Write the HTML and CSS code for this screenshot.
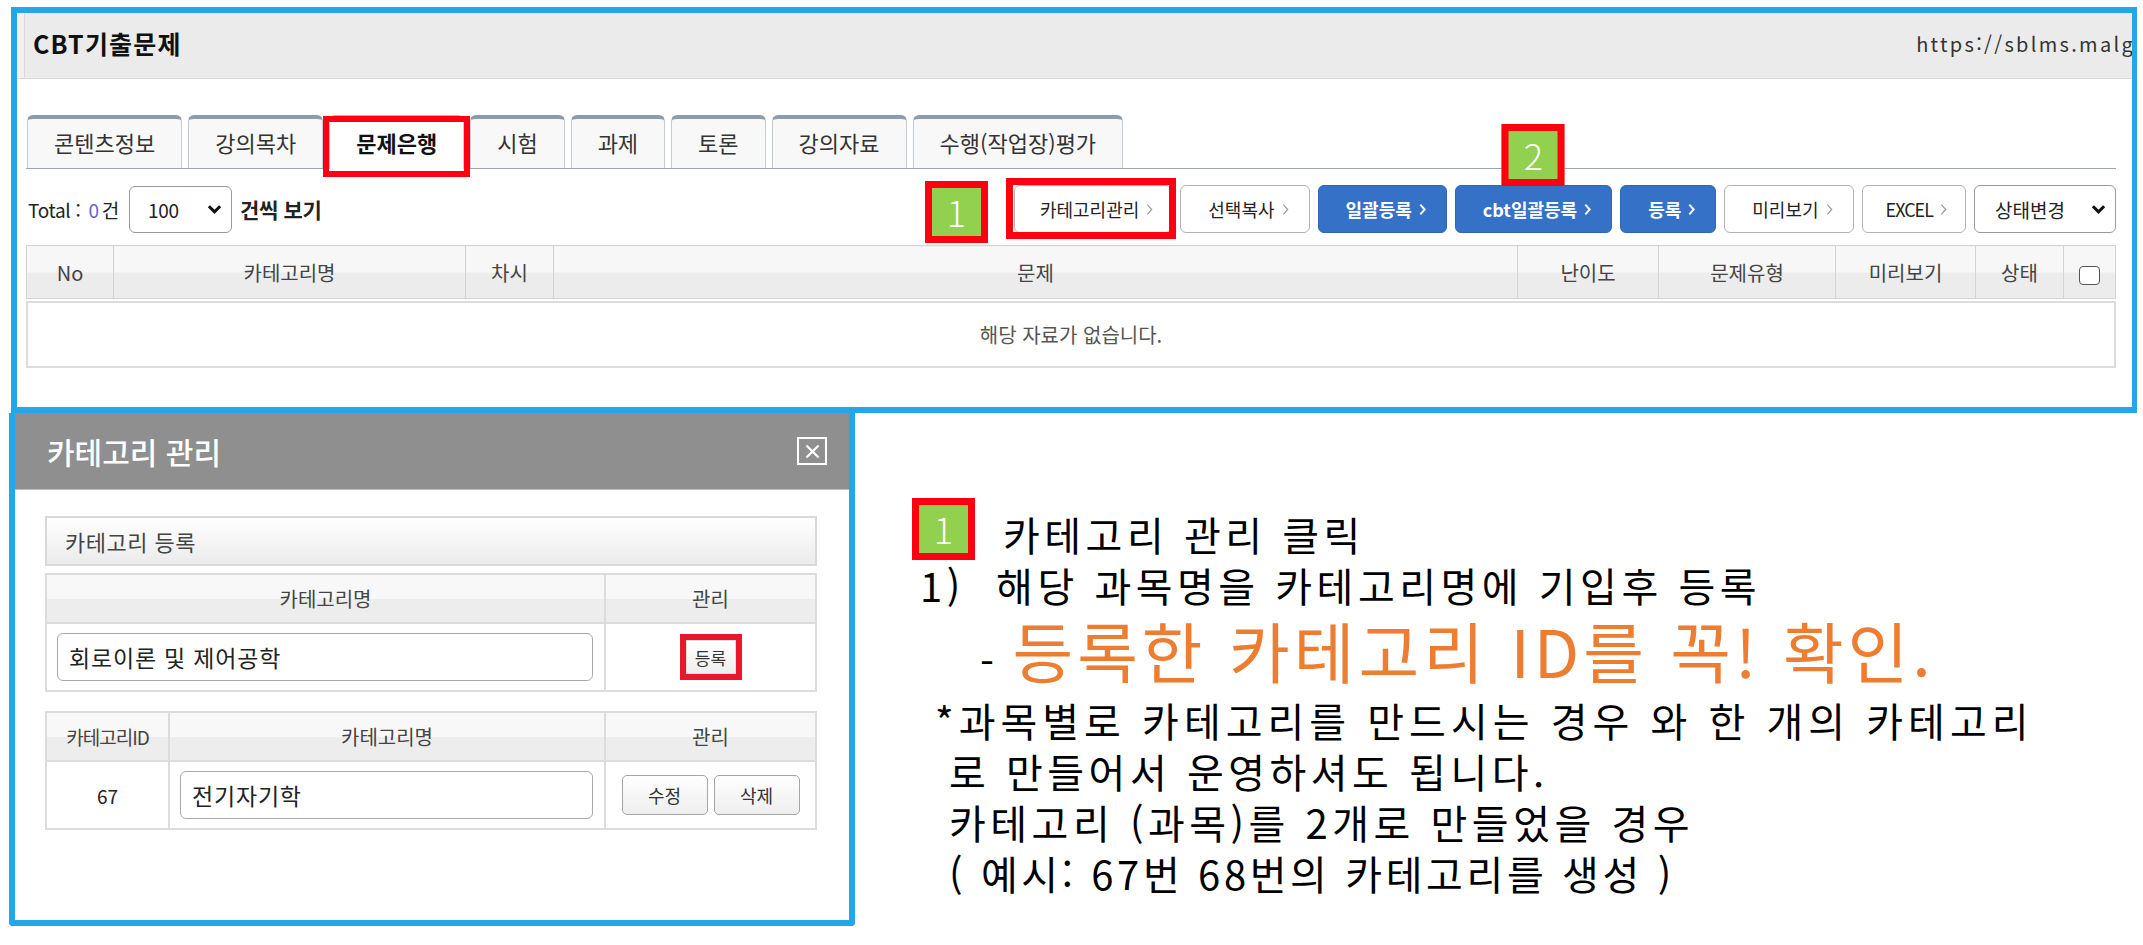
FILE: index.html
```html
<!DOCTYPE html>
<html lang="ko">
<head>
    <meta charset="UTF-8">
    <title>CBT기출문제 - 카테고리 관리</title>
    <link rel="stylesheet" href="styles.css">
</head>
<body>
    <!-- Course content panel -->
    <section class="panel">
        <div class="panel-head">
            <h1>CBT기출문제</h1>
            <span class="url">https://sblms.malg</span>
        </div>
        <div class="panel-body">
            <ul class="tabs">
                <li class="tab">콘텐츠정보</li>
                <li class="tab">강의목차</li>
                <li class="tab active">문제은행</li>
                <li class="tab">시험</li>
                <li class="tab">과제</li>
                <li class="tab">토론</li>
                <li class="tab">강의자료</li>
                <li class="tab">수행(작업장)평가</li>
            </ul>

            <div class="toolbar">
                <div class="count">
                    <span>Total : <em>0</em>건</span>
                    <div class="select">100
                        <svg class="caret" viewBox="0 0 16 10"><path d="M2 2l6 6 6-6"/></svg>
                    </div>
                    <b class="per">건씩 보기</b>
                </div>
                <div class="actions">
                    <button class="btn marked">
                        <span class="marker marker-left">1</span>
                        카테고리관리
                        <svg class="chev" viewBox="0 0 8 14"><path d="M1.5 1.5l5 5.5-5 5.5"/></svg>
                    </button>
                    <button class="btn">선택복사 <svg class="chev" viewBox="0 0 8 14"><path d="M1.5 1.5l5 5.5-5 5.5"/></svg></button>
                    <button class="btn btn-blue">일괄등록 <svg class="chev" viewBox="0 0 8 14"><path d="M1.5 1.5l5 5.5-5 5.5"/></svg></button>
                    <button class="btn btn-blue">
                        <span class="marker marker-top">2</span>
                        cbt일괄등록 <svg class="chev" viewBox="0 0 8 14"><path d="M1.5 1.5l5 5.5-5 5.5"/></svg>
                    </button>
                    <button class="btn btn-blue">등록 <svg class="chev" viewBox="0 0 8 14"><path d="M1.5 1.5l5 5.5-5 5.5"/></svg></button>
                    <button class="btn">미리보기 <svg class="chev" viewBox="0 0 8 14"><path d="M1.5 1.5l5 5.5-5 5.5"/></svg></button>
                    <button class="btn btn-narrow">EXCEL <svg class="chev" viewBox="0 0 8 14"><path d="M1.5 1.5l5 5.5-5 5.5"/></svg></button>
                    <div class="select select-wide">상태변경
                        <svg class="caret" viewBox="0 0 16 10"><path d="M2 2l6 6 6-6"/></svg>
                    </div>
                </div>
            </div>

            <table class="grid">
                <colgroup>
                    <col style="width:87px"><col style="width:352px"><col style="width:88px">
                    <col><col style="width:141px"><col style="width:177px">
                    <col style="width:140px"><col style="width:88px"><col style="width:52px">
                </colgroup>
                <tr>
                    <th>No</th><th>카테고리명</th><th>차시</th><th>문제</th><th>난이도</th>
                    <th>문제유형</th><th>미리보기</th><th>상태</th><th><span class="check"></span></th>
                </tr>
            </table>
            <div class="empty">해당 자료가 없습니다.</div>
        </div>
    </section>

    <div class="lower">
        <!-- Category management popup -->
        <section class="modal">
            <div class="modal-head">
                <h2>카테고리 관리</h2>
                <span class="close">
                    <svg viewBox="0 0 14 14"><path d="M2 2l10 10M12 2L2 12"/></svg>
                </span>
            </div>
            <div class="modal-body">
                <div class="box-title">카테고리 등록</div>
                <table class="form-table">
                    <colgroup><col><col style="width:211px"></colgroup>
                    <tr><th>카테고리명</th><th>관리</th></tr>
                    <tr>
                        <td class="input-cell"><input class="field" type="text" value="회로이론 및 제어공학"></td>
                        <td><button class="btn-sm btn-flag">등록</button></td>
                    </tr>
                </table>
                <table class="form-table list">
                    <colgroup><col style="width:123px"><col><col style="width:211px"></colgroup>
                    <tr><th class="id-head">카테고리ID</th><th>카테고리명</th><th>관리</th></tr>
                    <tr>
                        <td class="id">67</td>
                        <td class="input-cell"><input class="field" type="text" value="전기자기학"></td>
                        <td><button class="btn-sm">수정</button><button class="btn-sm">삭제</button></td>
                    </tr>
                </table>
            </div>
        </section>

        <!-- Guide notes -->
        <div class="notes">
            <div class="note-head"><span class="marker">1</span><span>카테고리 관리 클릭</span></div>
            <p class="l2">1)&nbsp; 해당 과목명을 카테고리명에 기입후 등록</p>
            <p class="l3"><span class="dash">-</span><span class="hl">등록한 카테고리 ID를 꼭! 확인.</span></p>
            <p class="l4">*과목별로 카테고리를 만드시는 경우 와 한 개의 카테고리</p>
            <p class="l5">로 만들어서 운영하셔도 됩니다.</p>
            <p class="l5">카테고리 (과목)를 2개로 만들었을 경우</p>
            <p class="l5 tight">( 예시: 67번 68번의 카테고리를 생성 )</p>
        </div>
    </div>
</body>
</html>
```

FILE: styles.css
```css
/* Base */
* {
    margin: 0;
    padding: 0;
    box-sizing: border-box;
}

body {
    font-family: "Noto Sans CJK KR", "Noto Sans", sans-serif;
    color: #222;
    background: #fff;
    width: 2143px;
    height: 945px;
    overflow: hidden;
}

/* Top panel */
.panel {
    margin: 7px 0 0 11px;
    width: 2126px;
    height: 406px;
    border: 6px solid #22a8ea;
    border-right-width: 5px;
    overflow: hidden;
}

.panel-head {
    height: 66px;
    background: #ebebeb;
    border-bottom: 1px solid #dadada;
    box-shadow: inset 7px 0 0 #f1f1f1, inset 8px 0 0 #dadada;
    display: flex;
    align-items: center;
    justify-content: space-between;
    padding: 0 0 5px 16px;
}

.panel-head h1 {
    font-size: 25px;
    font-weight: bold;
    letter-spacing: 1.2px;
    color: #111;
}

.url {
    font-size: 20px;
    letter-spacing: 2.3px;
    white-space: nowrap;
    color: #333;
    margin-right: -3px;
}

.panel-body {
    padding: 36px 16px 0 9px;
}

/* Tabs */
.tabs {
    display: flex;
    gap: 6px;
    list-style: none;
    height: 54px;
    border-bottom: 1px solid #9aa6b2;
    padding-left: 1px;
}

.tab {
    height: 53px;
    border: 1px solid #c5ccd3;
    border-top: 4px solid #8d9baa;
    border-bottom: none;
    border-radius: 6px 6px 0 0;
    background: #f8f8f8;
    padding: 0 26px;
    font-size: 22px;
    line-height: 47px;
    color: #333;
}

.tab.active {
    position: relative;
    height: 54px;
    background: #fff;
    border-top-color: #f4a742;
    font-weight: bold;
    color: #111;
}

.tab.active::after {
    content: "";
    position: absolute;
    left: -7px;
    right: -7px;
    top: -3px;
    bottom: -8px;
    border: 6px solid #ff0010;
}

/* Toolbar */
.toolbar {
    display: flex;
    justify-content: space-between;
    align-items: center;
    height: 48px;
    margin-top: 16px;
}

.count {
    display: flex;
    align-items: center;
    font-size: 19px;
    padding-left: 2px;
    letter-spacing: -0.3px;
}

.count em {
    font-style: normal;
    color: #6a5ce6;
    margin: 0 3px;
}

.select {
    width: 103px;
    height: 47px;
    border: 1px solid #9a9a9a;
    border-radius: 6px;
    margin: 0 8px 0 10px;
    display: flex;
    align-items: center;
    justify-content: space-between;
    padding: 0 9px 0 18px;
    font-size: 19px;
    background: #fff;
}

.select-wide {
    width: 142px;
    margin: 0;
    padding-left: 20px;
    height: 48px;
}

.caret {
    width: 15px;
    height: 10px;
    fill: none;
    stroke: #111;
    stroke-width: 3.2;
}

.per {
    font-size: 21px;
}

.actions {
    display: flex;
    gap: 8px;
}

.btn {
    position: relative;
    height: 48px;
    border: 1px solid #b3b3b3;
    border-radius: 6px;
    background: #fff;
    font-family: inherit;
    font-size: 18px;
    color: #222;
    padding: 0 20px 0 27px;
    display: flex;
    align-items: center;
    justify-content: center;
    gap: 7px;
}

.btn.marked {
    padding: 0 18px 0 25px;
}

.btn-narrow {
    padding: 0 18px 0 23px;
    letter-spacing: -1px;
}

.chev {
    width: 7px;
    height: 13px;
    fill: none;
    stroke: #999;
    stroke-width: 1.4;
}

.btn-blue {
    background: #3571c6;
    border-color: #2f66b4;
    color: #fff;
    font-weight: bold;
}

.btn-blue .chev {
    stroke: #fff;
    stroke-width: 2.2;
}

.marked::after {
    content: "";
    position: absolute;
    left: -9px;
    right: -5px;
    top: -8px;
    bottom: -7px;
    border: 7px solid #ff0010;
}

/* Green numbered markers */
.marker {
    width: 63px;
    height: 62px;
    border: 7px solid #ff0010;
    background: #92d050;
    color: #fff;
    font-size: 36px;
    font-weight: 300;
    line-height: 46px;
    text-align: center;
    letter-spacing: 0;
    flex-shrink: 0;
}

.marker-left {
    position: absolute;
    left: -90px;
    top: -5px;
}

.marker-top {
    position: absolute;
    left: 50%;
    top: -62px;
    transform: translateX(-50%);
}

/* List grid */
.grid {
    width: 100%;
    border-collapse: collapse;
    table-layout: fixed;
    margin-top: 12px;
}

.grid th {
    height: 53px;
    border: 1px solid #d3d3d3;
    background: linear-gradient(#f7f7f7 50%, #ececec 50%);
    font-weight: normal;
    font-size: 20px;
    color: #444;
}

.check {
    display: inline-block;
    width: 21px;
    height: 19px;
    border: 1.5px solid #555;
    border-radius: 4px;
    background: #fff;
    vertical-align: middle;
}

.empty {
    margin-top: 2px;
    height: 67px;
    border: 2px solid #dcdcdc;
    display: flex;
    align-items: center;
    justify-content: center;
    font-size: 20px;
    color: #555;
}

/* Lower area */
.lower {
    display: flex;
    align-items: flex-start;
}

.modal {
    margin-left: 9px;
    width: 846px;
    height: 513px;
    border: 6px solid #22a8ea;
    border-top: none;
    border-radius: 0 0 4px 4px;
    background: #fff;
}

.modal-head {
    height: 77px;
    background: #8f8f8f;
    border-bottom: 1px solid #bdbdbd;
    display: flex;
    align-items: center;
    justify-content: space-between;
    padding: 0 22px 0 32px;
}

.modal-head h2 {
    color: #fff;
    font-size: 30px;
    font-weight: 500;
}

.close {
    width: 30px;
    height: 28px;
    border: 2px solid #fff;
    display: flex;
    align-items: center;
    justify-content: center;
}

.close svg {
    width: 17px;
    height: 17px;
    stroke: #fff;
    stroke-width: 1.8;
}

.modal-body {
    padding: 26px 32px 0 30px;
}

.box-title {
    height: 50px;
    border: 2px solid #d9d9d9;
    background: linear-gradient(#fff, #ebebeb);
    padding-left: 18px;
    display: flex;
    align-items: center;
    font-size: 22px;
    letter-spacing: 0.5px;
    color: #444;
}

.form-table {
    width: 100%;
    border-collapse: collapse;
    table-layout: fixed;
    margin-top: 7px;
}

.form-table.list {
    margin-top: 19px;
}

.form-table th {
    height: 49px;
    border: 2px solid #dcdcdc;
    background: linear-gradient(#f8f8f8 50%, #ededed 50%);
    font-size: 20px;
    font-weight: normal;
    color: #444;
}

.form-table .id-head {
    font-size: 19px;
    letter-spacing: -1px;
}

.form-table td {
    height: 68px;
    border: 2px solid #dcdcdc;
    text-align: center;
}

.form-table .input-cell {
    padding: 0 11px 0 10px;
}

.id {
    font-size: 19px;
}

.field {
    width: 100%;
    height: 48px;
    border: 1px solid #a9a9a9;
    border-radius: 6px;
    padding: 0 11px;
    font-family: inherit;
    font-size: 23px;
    letter-spacing: 0.8px;
    color: #222;
}

.btn-sm {
    width: 86px;
    height: 40px;
    margin: 0 3px;
    border: 1px solid #a5a5a5;
    border-radius: 5px;
    background: linear-gradient(#fff, #eee);
    font-family: inherit;
    font-size: 18px;
    color: #333;
}

.btn-flag {
    width: 50px;
    height: 34px;
    font-size: 17px;
    border-radius: 0;
    border-color: #ddd;
    outline: 6px solid #e8172b;
}

/* Guide notes */
.notes {
    margin-left: 57px;
    padding-top: 84px;
    font-size: 40px;
    line-height: 51px;
    letter-spacing: 4.5px;
    color: #000;
    white-space: nowrap;
}

.note-head {
    display: flex;
    align-items: flex-end;
    gap: 28px;
    height: 63px;
}

.l2 {
    padding-left: 8px;
}

.l3 {
    padding: 4px 0 0 68px;
    line-height: 68px;
}

.hl {
    color: #ed7d31;
    font-size: 66px;
    letter-spacing: 4px;
    margin-left: 14px;
}

.l4 {
    padding-left: 23px;
    letter-spacing: 5px;
}

.l5 {
    padding-left: 37px;
}

.l5.tight {
    letter-spacing: 3.6px;
}
```
